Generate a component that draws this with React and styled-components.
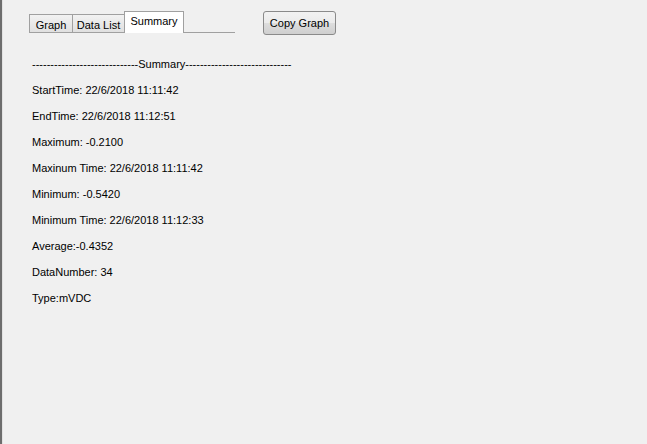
import React from "react";
import styled, { createGlobalStyle } from "styled-components";

const GlobalStyle = createGlobalStyle`
  html, body {
    margin: 0;
    padding: 0;
    background: #f0f0f0;
  }
  body {
    font-family: "Liberation Sans", Arial, sans-serif;
    font-size: 11px;
    color: #000;
  }
`;

const rows = [
  "StartTime: 22/6/2018 11:11:42",
  "EndTime: 22/6/2018 11:12:51",
  "Maximum: -0.2100",
  "Maxinum Time: 22/6/2018 11:11:42",
  "Minimum: -0.5420",
  "Minimum Time: 22/6/2018 11:12:33",
  "Average:-0.4352",
  "DataNumber: 34",
  "Type:mVDC",
];

const tabs = [
  { label: "Graph", width: 44 },
  { label: "Data List", width: 53 },
  { label: "Summary", width: 60, active: true },
];

export default function App() {
  const dashes = "-".repeat(29);
  return (
    <>
      <GlobalStyle />
      <Window>
        <Edge />
        <Panel>
          <TopBar>
            <TabStrip>
              {tabs.map((t) => (
                <Tab key={t.label} active={t.active} w={t.width}>
                  {t.label}
                </Tab>
              ))}
              <TabLine />
            </TabStrip>
            <Button>Copy Graph</Button>
          </TopBar>
          <Summary>
            <Row>
              {dashes}Summary{dashes}
            </Row>
            {rows.map((r) => (
              <Row key={r}>{r}</Row>
            ))}
          </Summary>
        </Panel>
      </Window>
    </>
  );
}

const Window = styled.div`
  display: flex;
  height: 444px;
  width: 647px;
  overflow: hidden;
`;

const Edge = styled.div`
  width: 2px;
  background: #6d6d6d;
  border-right: 1px solid #e2e2e2;
`;

const Panel = styled.div`
  flex: 1;
  display: flex;
  flex-direction: column;
  padding: 11px 0 0 26px;
`;

const TopBar = styled.div`
  display: flex;
  align-items: flex-start;
`;

const TabStrip = styled.div`
  display: flex;
  align-items: flex-end;
  height: 22px;
`;

const Tab = styled.div`
  box-sizing: border-box;
  width: ${(p) => p.w}px;
  height: ${(p) => (p.active ? "22px" : "19px")};
  padding-top: ${(p) => (p.active ? "3px" : "4px")};
  text-align: center;
  border: 1px solid #a0a0a0;
  border-bottom: ${(p) => (p.active ? "none" : "1px solid #a0a0a0")};
  margin-left: -1px;
  background: ${(p) =>
    p.active ? "#ffffff" : "linear-gradient(#f2f2f2, #e0e0e0)"};
  white-space: nowrap;
  line-height: 12px;
  &:first-child {
    margin-left: 0;
  }
`;

const TabLine = styled.div`
  width: 51px;
  height: 1px;
  background: #a0a0a0;
`;

const Button = styled.div`
  box-sizing: border-box;
  margin-left: 28px;
  width: 73px;
  height: 24px;
  border: 1px solid #8a8a8a;
  border-radius: 3px;
  background: linear-gradient(#f2f2f2 0%, #ebebeb 50%, #dddddd 51%, #cfcfcf 100%);
  display: flex;
  align-items: center;
  justify-content: center;
  white-space: nowrap;
`;

const Summary = styled.div`
  display: flex;
  flex-direction: column;
  padding: 23px 0 0 3px;
  gap: 13px;
`;

const Row = styled.div`
  height: 13px;
  line-height: 13px;
  white-space: nowrap;
`;
